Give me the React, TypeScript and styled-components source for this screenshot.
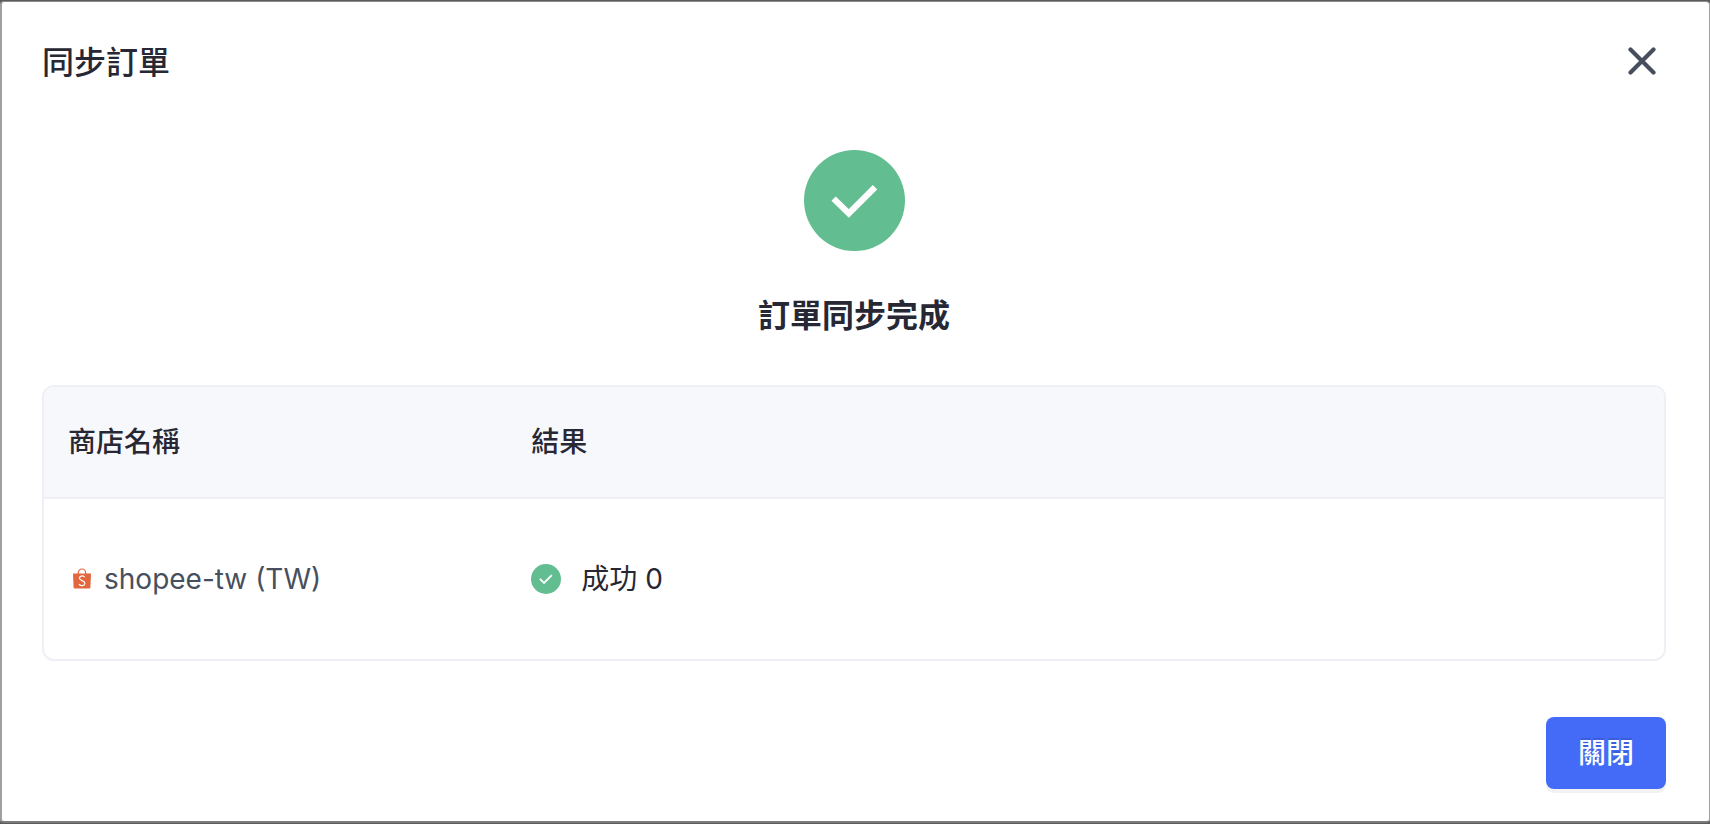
import React from "react";
import styled, { createGlobalStyle } from "styled-components";

const GlobalStyle = createGlobalStyle`
  *, *::before, *::after { box-sizing: border-box; }
  body {
    margin: 0;
    background: #5c5a5c;
    color: #272834;
    font-family: Inter, "Noto Sans CJK TC", sans-serif;
    font-size: 28px;
    line-height: 44px;
    -webkit-font-smoothing: antialiased;
  }
`;

const Backdrop = styled.div`
  display: flex;
  min-height: 100vh;
  padding: 1px 0;
`;

const Dialog = styled.section`
  flex: 1;
  display: flex;
  flex-direction: column;
  padding: 36px 43px 31px 40px;
  background: #fff;
  border: solid #a0a0a0;
  border-width: 1px 1px 2px 2px;
  border-top-color: #8a8a8a;
  border-bottom-color: #7c7b7c;
  border-radius: 4px;
`;

const Header = styled.header`
  display: flex;
  align-items: flex-start;
  justify-content: space-between;
`;

const Title = styled.h1`
  margin: 0;
  font-size: 32px;
  font-weight: 500;
  line-height: 50px;
`;

const CloseIconButton = styled.button`
  display: flex;
  align-items: center;
  justify-content: center;
  width: 48px;
  height: 46px;
  padding: 0;
  border: 0;
  background: none;
  color: #474f5e;
  cursor: pointer;
`;

const Summary = styled.div`
  display: flex;
  flex-direction: column;
  align-items: center;
  gap: 41px;
  padding: 62px 0 45px;
`;

const SummaryTitle = styled.h2`
  margin: 0;
  font-size: 32px;
  font-weight: 700;
  line-height: 48px;
`;

const TableFrame = styled.div`
  border: 2px solid #efeff6;
  border-radius: 12px;
  overflow: hidden;
`;

const Table = styled.table`
  width: 100%;
  border-collapse: separate;
  border-spacing: 0;
  table-layout: fixed;
  text-align: left;
`;

const HeadCell = styled.th<{ $width?: string }>`
  width: ${({ $width }) => $width ?? "auto"};
  height: 112px;
  padding: 0 24px;
  background: #f7f8fc;
  border-bottom: 2px solid #efeff4;
  font-weight: 500;
`;

const Cell = styled.td`
  height: 160px;
  padding: 0 24px;
`;

const CellContent = styled.div<{ $gap: number; $muted?: boolean }>`
  display: flex;
  align-items: center;
  gap: ${({ $gap }) => $gap}px;
  color: ${({ $muted }) => ($muted ? "#474f5e" : "inherit")};
`;

const Footer = styled.footer`
  display: flex;
  justify-content: flex-end;
  margin-top: 56px;
`;

const PrimaryButton = styled.button`
  height: 72px;
  padding: 0 32px;
  border: 0;
  border-radius: 8px;
  background: #446bf7;
  box-shadow: 0 4px 0 rgba(0, 0, 0, 0.05);
  color: #fff;
  font: inherit;
  font-weight: 500;
  text-shadow: 0 -2px 0 rgba(0, 0, 0, 0.12);
  cursor: pointer;
`;

function CloseIcon() {
  return (
    <svg width="28" height="28" viewBox="0 0 28 28" aria-hidden="true">
      <path d="M2.5 2.5 25.5 25.5M25.5 2.5 2.5 25.5" fill="none" stroke="currentColor" strokeWidth="4.2" strokeLinecap="round" />
    </svg>
  );
}

function SuccessIcon() {
  return (
    <svg width="101" height="101" viewBox="0 0 101 101" aria-hidden="true">
      <circle cx="50.5" cy="50.5" r="50.5" fill="#62bd91" />
      <path d="M29.6 48.6 44.8 63.5 71 37.2" fill="none" stroke="#fff" strokeWidth="6.2" />
    </svg>
  );
}

function SuccessBadge() {
  return (
    <svg width="30" height="30" viewBox="0 0 30 30" aria-hidden="true">
      <circle cx="15" cy="15" r="15" fill="#62bd91" />
      <path d="M8.9 14.9 13 19 20.9 11.1" fill="none" stroke="#fff" strokeWidth="1.8" />
    </svg>
  );
}

function ShopeeIcon() {
  return (
    <svg width="28" height="28" viewBox="0 0 28 28" aria-hidden="true">
      <path d="M5 8.4H23L22.4 22.3Q22.3 23.6 21 23.6H7Q5.7 23.6 5.6 22.3Z" fill="#e3673e" />
      <path d="M10.2 9C10.2 2.3 17.8 2.3 17.8 9" fill="none" stroke="#e3673e" strokeWidth="1.2" />
      <path d="M16.7 11.9C14.2 10.2 11.3 11 11.5 13.3C11.7 15.9 17 15.3 16.9 18.3C16.8 21 13.3 21.3 10.9 19.2" fill="none" stroke="#fff" strokeWidth="1.2" />
    </svg>
  );
}

const results = [{ store: "shopee-tw (TW)", result: "成功 0" }];

export default function App() {
  return (
    <>
      <GlobalStyle />
      <Backdrop>
        <Dialog role="dialog" aria-labelledby="dialog-title">
          <Header>
            <Title id="dialog-title">同步訂單</Title>
            <CloseIconButton type="button" aria-label="關閉">
              <CloseIcon />
            </CloseIconButton>
          </Header>
          <Summary>
            <SuccessIcon />
            <SummaryTitle>訂單同步完成</SummaryTitle>
          </Summary>
          <TableFrame>
            <Table>
              <thead>
                <tr>
                  <HeadCell $width="28.6%" scope="col">商店名稱</HeadCell>
                  <HeadCell scope="col">結果</HeadCell>
                </tr>
              </thead>
              <tbody>
                {results.map(({ store, result }) => (
                  <tr key={store}>
                    <Cell>
                      <CellContent $gap={8} $muted>
                        <ShopeeIcon />
                        {store}
                      </CellContent>
                    </Cell>
                    <Cell>
                      <CellContent $gap={20}>
                        <SuccessBadge />
                        {result}
                      </CellContent>
                    </Cell>
                  </tr>
                ))}
              </tbody>
            </Table>
          </TableFrame>
          <Footer>
            <PrimaryButton type="button">關閉</PrimaryButton>
          </Footer>
        </Dialog>
      </Backdrop>
    </>
  );
}
